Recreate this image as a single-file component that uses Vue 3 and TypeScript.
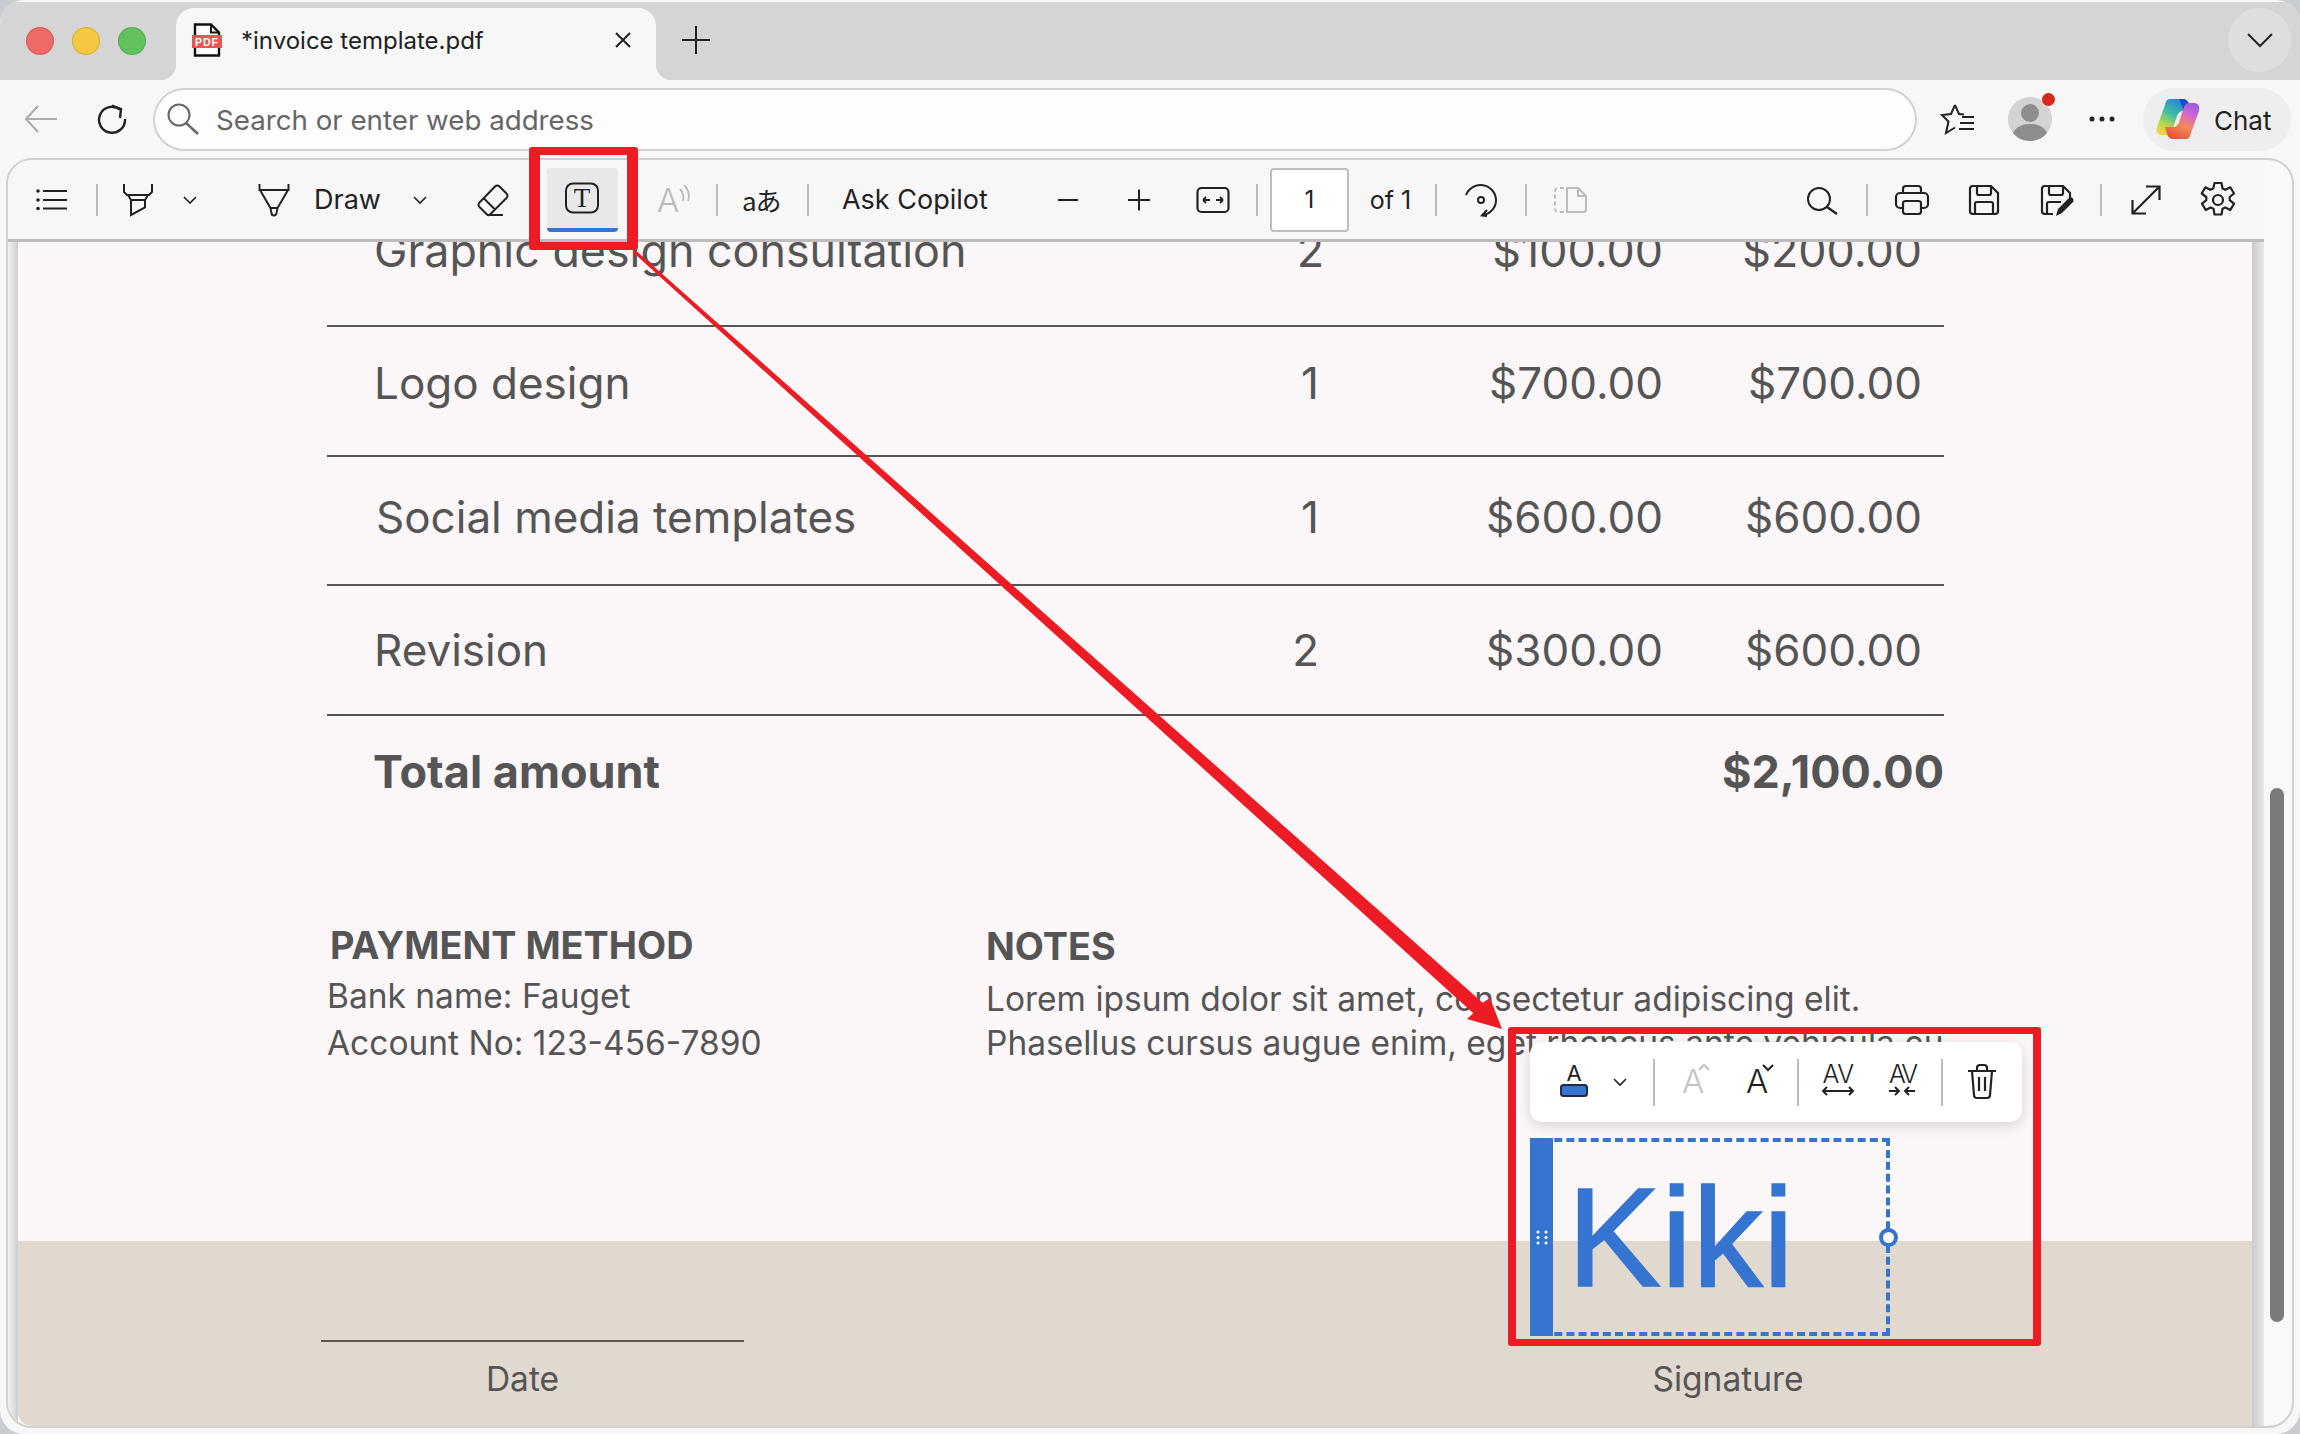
<template>
  <div class="app">
    <div class="window">
      <!-- tab strip -->
      <div class="tabstrip">
        <div class="lights">
          <span class="light red"></span>
          <span class="light yellow"></span>
          <span class="light green"></span>
        </div>
        <div class="tab">
          <svg class="pdf-icon" width="32" height="34" viewBox="0 0 32 34">
            <path d="M4 1.500h16l8 8v23H4z" fill="#fff" stroke="#111" stroke-width="2.400" />
            <path d="M20 1.500v8h8" fill="none" stroke="#111" stroke-width="2" />
            <rect x="1" y="12" width="30" height="13" fill="#e8544f" />
            <text x="16" y="22.500" text-anchor="middle" class="pdf-label">PDF</text>
          </svg>
          <span class="tab-title">*invoice template.pdf</span>
          <svg class="tab-close" width="18" height="18" viewBox="0 0 18 18">
            <path d="M2 2l14 14M16 2L2 16" stroke="#222" stroke-width="2" />
          </svg>
        </div>
        <svg class="tab-plus" width="30" height="30" viewBox="0 0 30 30">
          <path d="M15 1v28M1 15h28" stroke="#222" stroke-width="2" />
        </svg>
        <div class="tab-menu">
          <svg width="26" height="16" viewBox="0 0 26 16">
            <path d="M1 2l12 12L25 2" fill="none" stroke="#222" stroke-width="2" />
          </svg>
        </div>
      </div>

      <!-- address bar -->
      <div class="navbar">
        <svg class="nav-back" width="34" height="28" viewBox="0 0 34 28">
          <path d="M33 14H2M14 1L2 14l12 13" fill="none" stroke="#aaa" stroke-width="2" />
        </svg>
        <svg class="nav-reload" width="32" height="30" viewBox="0 0 32 30">
          <path d="M24 5.500A13 13 0 1 0 29 15" fill="none" stroke="#222" stroke-width="2.400" />
          <path d="M16 1.500l9 3.500-1 9" fill="none" stroke="#222" stroke-width="2.400" />
        </svg>
        <div class="address">
          <svg width="36" height="32" viewBox="0 0 36 32">
            <circle cx="14" cy="12" r="10.500" fill="none" stroke="#666" stroke-width="2" />
            <path d="M21 20l12 11" stroke="#666" stroke-width="2.400" />
          </svg>
          <span>Search or enter web address</span>
        </div>
        <svg class="nav-fav" width="36" height="32" viewBox="0 0 36 32">
          <path d="M15 2l4 9 5 .5M15 2l-4 9-9 1 6.500 6.500L6 30l9-5.500" fill="none" stroke="#222" stroke-width="2" />
          <path d="M22 14h12M20 20h14M19 26h15" stroke="#222" stroke-width="2" />
        </svg>
        <div class="avatar">
          <svg width="44" height="44" viewBox="0 0 44 44">
            <circle cx="22" cy="22" r="22" fill="#d4d3d1" />
            <circle cx="22" cy="16" r="9" fill="#8f8d8b" />
            <path d="M5 36c3-6 9-9 17-9s14 3 17 9c-4 5-10 8-17 8S9 41 5 36z" fill="#8f8d8b" />
          </svg>
          <span class="avatar-dot"></span>
        </div>
        <svg class="nav-more" width="28" height="8" viewBox="0 0 28 8">
          <circle cx="4" cy="4" r="2.500" fill="#222" />
          <circle cx="14" cy="4" r="2.500" fill="#222" />
          <circle cx="24" cy="4" r="2.500" fill="#222" />
        </svg>
        <div class="chat">
          <svg width="44" height="42" viewBox="0 0 44 42">
            <defs>
              <linearGradient id="copA" x1="0.700" y1="0" x2="0.200" y2="1">
                <stop offset="0" stop-color="#2b7fe0" />
                <stop offset="0.450" stop-color="#3fbfa0" />
                <stop offset="0.750" stop-color="#b9d84a" />
                <stop offset="1" stop-color="#f4d23c" />
              </linearGradient>
              <linearGradient id="copB" x1="0.300" y1="1" x2="0.700" y2="0">
                <stop offset="0" stop-color="#e8503a" />
                <stop offset="0.400" stop-color="#f08a5a" />
                <stop offset="0.700" stop-color="#d868c8" />
                <stop offset="1" stop-color="#9a5fe0" />
              </linearGradient>
            </defs>
            <path d="M14 1h13c3 0 5 2 6 5l2 7h-8c-3 0-5 2-6 5l-5 15c-1 3-3 4-6 4H6C1 37 0 33 1 29L9 7c1-4 2-6 5-6z" fill="url(#copA)" />
            <path d="M23 1h4c3 0 5 2 6 5l2 7h-7z" fill="#1f4fc8" />
            <path d="M30 41H17c-3 0-5-2-6-5l-2-7h8c3 0 5-2 6-5l5-15c1-3 3-4 6-4h4c5 0 6 4 5 8l-8 22c-1 4-2 6-5 6z" fill="url(#copB)" />
          </svg>
          <span>Chat</span>
        </div>
      </div>

      <!-- pdf viewer -->
      <div class="viewer">
        <div class="viewer-main">
          <div class="tools">
            <svg class="t-list" viewBox="0 0 40 40">
              <circle cx="7" cy="11" r="1.800" fill="#222" />
              <circle cx="7" cy="20" r="1.800" fill="#222" />
              <circle cx="7" cy="28.500" r="1.800" fill="#222" />
              <path d="M12 11h24M12 20h24M12 28.500h24" stroke="#222" stroke-width="2" />
            </svg>
            <i class="sep s-1"></i>
            <svg class="t-highlight" viewBox="0 0 40 40">
              <path d="M6 4v8l3 3h22l3-3V4M10 15l3 5h14l3-5M13 20v15l14-7.500V20" fill="none" stroke="#222" stroke-width="2" />
            </svg>
            <svg class="chev c-1" viewBox="0 0 16 10"><path d="M2 2l6 6 6-6" /></svg>
            <svg class="t-pen" viewBox="0 0 40 40">
              <path d="M6.500 4v6h29V4M7 10l10.500 18h7L35 10M17.500 28l1 5a2.500 2.500 0 0 0 5 0l1-5" fill="none" stroke="#222" stroke-width="2" />
            </svg>
            <span class="t-draw">Draw</span>
            <svg class="chev c-2" viewBox="0 0 16 10"><path d="M2 2l6 6 6-6" /></svg>
            <svg class="t-eraser" viewBox="0 0 40 40">
              <path d="M22 6.500a3 3 0 0 1 4.500 0l7 7a3 3 0 0 1 0 4.500L17 34.500a2 2 0 0 1-3 0l-7.500-7.500a3 3 0 0 1 0-4.500zM11 18.500l11 11M15 35h15" fill="none" stroke="#222" stroke-width="2" />
            </svg>
            <div class="t-text">
              <svg width="40" height="40" viewBox="0 0 40 40">
                <rect x="4" y="5.500" width="32" height="29" rx="7" fill="none" stroke="#222" stroke-width="2" />
                <text x="20" y="29" text-anchor="middle" class="serif-t">T</text>
              </svg>
            </div>
            <i class="sep s-2"></i>
            <svg class="t-read" viewBox="0 0 40 40">
              <text x="16" y="32" text-anchor="middle" class="icon-a off">A</text>
              <path d="M28 9c3 3 4 7 3 12M32 5c4 4 6 10 4 16" fill="none" stroke="#bbb" stroke-width="1.800" />
            </svg>
            <i class="sep s-3"></i>
            <span class="t-translate">aあ</span>
            <i class="sep s-4"></i>
            <span class="t-ask">Ask Copilot</span>
            <svg class="t-minus" viewBox="0 0 40 40"><path d="M10 20h20" stroke="#222" stroke-width="2" /></svg>
            <svg class="t-plus" viewBox="0 0 40 40"><path d="M9 20h22M20 9.500v21" stroke="#222" stroke-width="2" /></svg>
            <svg class="t-fit" viewBox="0 0 40 40">
              <rect x="4.500" y="8" width="31" height="24" rx="4" fill="none" stroke="#222" stroke-width="2.200" />
              <path d="M10 20h7M10 20l3-3M10 20l3 3M30 20h-7M30 20l-3-3M30 20l-3 3" fill="none" stroke="#222" stroke-width="1.800" />
            </svg>
            <i class="sep s-5"></i>
            <div class="t-page">1</div>
            <span class="t-of">of 1</span>
            <i class="sep s-6"></i>
            <svg class="t-rotate" viewBox="0 0 40 40">
              <path d="M5 15A15.500 15.500 0 0 1 35 20a15 15 0 0 1-13 15" fill="none" stroke="#222" stroke-width="2" />
              <path d="M26 30l-5 5.500 5 .500" fill="none" stroke="#222" stroke-width="2" />
              <circle cx="20" cy="20" r="3" fill="none" stroke="#222" stroke-width="2" />
            </svg>
            <i class="sep s-7"></i>
            <svg class="t-two" viewBox="0 0 40 40">
              <path d="M14 8H8a3 3 0 0 0-3 3v18a3 3 0 0 0 3 3h6" fill="none" stroke="#bbb" stroke-width="2" stroke-dasharray="4 3" />
              <path d="M17 8h11l8 8v13a3 3 0 0 1-3 3H17zM28 8v8h8" fill="none" stroke="#bbb" stroke-width="2" />
            </svg>

            <svg class="t-search" viewBox="0 0 40 40">
              <circle cx="17" cy="19" r="11" fill="none" stroke="#222" stroke-width="2" />
              <path d="M25 27l10 7" stroke="#222" stroke-width="2.400" />
            </svg>
            <i class="sep s-8"></i>
            <svg class="t-print" viewBox="0 0 40 40">
              <g fill="none" stroke="#222" stroke-width="2.200">
                <path d="M11 13V9a3 3 0 0 1 3-3h12a3 3 0 0 1 3 3v4" />
                <path d="M11 28H8a4 4 0 0 1-4-4v-7a4 4 0 0 1 4-4h24a4 4 0 0 1 4 4v7a4 4 0 0 1-4 4h-3" />
                <rect x="11" y="21" width="18" height="13" rx="2.500" />
              </g>
            </svg>
            <svg class="t-save" viewBox="0 0 40 40">
              <g fill="none" stroke="#222" stroke-width="2.200">
                <path d="M9 6h18l7 7v18a3 3 0 0 1-3 3H9a3 3 0 0 1-3-3V9a3 3 0 0 1 3-3z" />
                <path d="M13 6v7a2 2 0 0 0 2 2h10a2 2 0 0 0 2-2V6M11 34V24a2 2 0 0 1 2-2h14a2 2 0 0 1 2 2v10" />
              </g>
            </svg>
            <svg class="t-saveas" viewBox="0 0 40 40">
              <g fill="none" stroke="#222" stroke-width="2.200">
                <path d="M17 34H9a3 3 0 0 1-3-3V9a3 3 0 0 1 3-3h18l7 7v6" />
                <path d="M13 6v7a2 2 0 0 0 2 2h10a2 2 0 0 0 2-2V6M11 34V24a2 2 0 0 1 2-2h12" />
              </g>
              <path d="M20 36l2-7 11-11c2-2 6 1 4 4L26 33z" fill="#222" />
            </svg>
            <i class="sep s-9"></i>
            <svg class="t-expand" viewBox="0 0 40 40">
              <path d="M7 33L33 7M20 6.500h13.500V20M6.500 20v13.500H20" fill="none" stroke="#222" stroke-width="2.200" />
            </svg>
            <svg class="t-gear" viewBox="0 0 40 40">
              <g fill="none" stroke="#222" stroke-width="2.200">
                <path d="M16.500 3h7l1 5.500 2.800 1.300 5-2.500 3.700 6.200-4.300 3.500v3.200l4.300 3.500-3.700 6.200-5-2.500-2.800 1.300-1 5.800h-7l-1-5.800-2.800-1.300-5 2.500-3.700-6.200 4.300-3.500V17L3.700 13.500 7.400 7.300l5 2.500 2.800-1.300z" stroke-linejoin="round" />
                <circle cx="20" cy="20" r="5" />
              </g>
            </svg>
          </div>

          <div class="page-frame">
            <div class="page">
              <div class="doc">
                <div class="items">
                  <div v-for="row in rows" :key="row.name" class="item" :class="row.cls">
                    <span class="item-name">{{ row.name }}</span>
                    <span class="item-qty">{{ row.qty }}</span>
                    <span class="item-price">{{ row.price }}</span>
                    <span class="item-amount">{{ row.amount }}</span>
                  </div>
                  <div class="total">
                    <span>Total amount</span>
                    <span>$2,100.00</span>
                  </div>
                </div>

                <div class="info">
                  <div class="payment">
                    <h3>PAYMENT METHOD</h3>
                    <p>Bank name: Fauget</p>
                    <p>Account No: 123-456-7890</p>
                  </div>
                  <div class="notes">
                    <h3>NOTES</h3>
                    <p>Lorem ipsum dolor sit amet, consectetur adipiscing elit.</p>
                    <p>Phasellus cursus augue enim, eget rhoncus ante vehicula eu</p>
                  </div>
                </div>
              </div>

              <div class="doc-foot">
                <div class="foot-date">
                  <div class="foot-line"></div>
                  <span>Date</span>
                </div>
                <div class="foot-sign">Signature</div>
              </div>
            </div>
          </div>
        </div>

        <div class="track">
          <div class="thumb"></div>
        </div>
      </div>
    </div>

    <!-- floating text toolbar and the text box -->
    <div class="float-bar">
      <svg class="f-color" viewBox="0 0 44 44">
        <text x="22" y="20.500" text-anchor="middle" class="icon-small">A</text>
        <rect x="9" y="25" width="26" height="11" rx="2.500" fill="#3574d0" stroke="#1d2b45" stroke-width="2" />
      </svg>
      <svg class="chev f-chev" viewBox="0 0 16 10"><path d="M2 2l6 6 6-6" /></svg>
      <i class="sep f-s1"></i>
      <svg class="f-up" viewBox="0 0 44 44">
        <text x="20" y="33" text-anchor="middle" class="icon-grow off">A</text>
        <path d="M26 10l5-5 5 5" fill="none" stroke="#c4c4c4" stroke-width="2" />
      </svg>
      <svg class="f-down" viewBox="0 0 44 44">
        <text x="20" y="33" text-anchor="middle" class="icon-grow">A</text>
        <path d="M26 5l5 5 5-5" fill="none" stroke="#222" stroke-width="2" />
      </svg>
      <i class="sep f-s2"></i>
      <svg class="f-wide" viewBox="0 0 44 44">
        <text x="22" y="23" text-anchor="middle" class="icon-av">AV</text>
        <path d="M7 31h30M11 27l-4 4 4 4M33 27l4 4-4 4" fill="none" stroke="#222" stroke-width="2" />
      </svg>
      <svg class="f-narrow" viewBox="0 0 44 44">
        <text x="22" y="23" text-anchor="middle" class="icon-av tight">AV</text>
        <path d="M9 31h10M15 27l4 4-4 4M35 31H25M29 27l-4 4 4 4" fill="none" stroke="#222" stroke-width="2" />
      </svg>
      <i class="sep f-s3"></i>
      <svg class="f-trash" viewBox="0 0 44 44">
        <g fill="none" stroke="#222" stroke-width="2.200">
          <path d="M8 11h28M12 11l2 24a3 3 0 0 0 3 3h10a3 3 0 0 0 3-3l2-24M17 11V8a3 3 0 0 1 3-3h4a3 3 0 0 1 3 3v3M19 17v14M25 17v14" />
        </g>
      </svg>
    </div>

    <div class="sign-box">
      <div class="sign-grip">
        <svg width="12" height="15" viewBox="0 0 12 15">
          <g fill="#fff">
            <circle cx="2" cy="2" r="1.500" /><circle cx="10" cy="2" r="1.500" />
            <circle cx="2" cy="7.500" r="1.500" /><circle cx="10" cy="7.500" r="1.500" />
            <circle cx="2" cy="13" r="1.500" /><circle cx="10" cy="13" r="1.500" />
          </g>
        </svg>
      </div>
      <span class="sign-text">Kiki</span>
      <span class="sign-handle"></span>
    </div>

    <!-- red annotations -->
    <div class="mark mark-tool"></div>
    <div class="mark mark-sign"></div>
    <svg class="arrow" width="2300" height="1434" viewBox="0 0 2300 1434">
      <polygon points="632.800,252.100 1473.300,1013.200 1467,1019 1502,1029 1490,998 1482.700,1002.800 635.200,249.900" fill="#ed1c24" />
    </svg>
  </div>
</template>

<script setup lang="ts">
interface Row {
  name: string
  qty: number
  price: string
  amount: string
  cls: string
}

const rows: Row[] = [
  { name: 'Graphic design consultation', qty: 2, price: '$100.00', amount: '$200.00', cls: 'r1' },
  { name: 'Logo design', qty: 1, price: '$700.00', amount: '$700.00', cls: 'r2' },
  { name: 'Social media templates', qty: 1, price: '$600.00', amount: '$600.00', cls: 'r3' },
  { name: 'Revision', qty: 2, price: '$300.00', amount: '$600.00', cls: 'r4' },
]
</script>

<style>
html,
body {
  margin: 0;
  background: #c9ccd0;
}
</style>

<style scoped>
.app {
  position: relative;
  width: 2300px;
  height: 1434px;
  overflow: hidden;
  font-family: Inter, "Noto Sans", sans-serif;
  color: #222;
}

.window {
  display: flex;
  flex-direction: column;
  height: 1434px;
  box-sizing: border-box;
  padding-top: 2px;
  background: #f7f7f7;
  border-radius: 24px;
  overflow: hidden;
}

/* tab strip */
.tabstrip {
  display: flex;
  align-items: flex-start;
  height: 78px;
  flex: none;
  background: #d5d5d5;
}

.lights {
  display: flex;
  gap: 18px;
  padding: 25px 0 0 26px;
  width: 150px;
  box-sizing: border-box;
}

.light {
  width: 28px;
  height: 28px;
  border-radius: 50%;
  box-sizing: border-box;
  border: 1px solid rgba(0, 0, 0, 0.12);
}
.red { background: #ee6a66; }
.yellow { background: #f5c842; }
.green { background: #62c15f; }

.tab {
  position: relative;
  display: flex;
  align-items: center;
  width: 480px;
  height: 72px;
  margin: 6px 0 0 26px;
  background: #f7f7f7;
  border-radius: 18px 18px 0 0;
  box-sizing: border-box;
  padding: 0 24px 8px 16px;
  font-size: 24px;
}

.tab::before,
.tab::after {
  content: "";
  position: absolute;
  bottom: 0;
  width: 16px;
  height: 16px;
}
.tab::before {
  left: -16px;
  background: radial-gradient(circle at 0 0, transparent 16px, #f7f7f7 16.500px);
}
.tab::after {
  right: -16px;
  background: radial-gradient(circle at 100% 0, transparent 16px, #f7f7f7 16.500px);
}

.pdf-icon { flex: none; margin-left: -1px; }
.pdf-label { font: 700 10.500px "Liberation Sans", sans-serif; fill: #fff; letter-spacing: 1px; }
.tab-title { margin-left: 18px; flex: 1; white-space: nowrap; }
.tab-close { flex: none; }

.tab-plus { margin: 23px 0 0 25px; flex: none; }

.tab-menu {
  display: flex;
  align-items: center;
  justify-content: center;
  width: 63px;
  height: 64px;
  margin: 6px 9px 0 auto;
  border-radius: 50%;
  background: #dedede;
}

/* address bar */
.navbar {
  display: flex;
  align-items: center;
  height: 78px;
  flex: none;
  padding-left: 24px;
}

.nav-back { flex: none; }
.nav-reload { flex: none; margin-left: 38px; }

.address {
  display: flex;
  align-items: center;
  gap: 15px;
  width: 1764px;
  height: 63px;
  margin-left: 25px;
  padding-left: 10px;
  box-sizing: border-box;
  background: #fdfdfd;
  border: 2px solid #d2d2d2;
  border-radius: 32px;
  font-size: 27.700px;
  color: #666;
}
.address span { padding-top: 1px; }

.nav-fav { margin-left: 23px; flex: none; }

.avatar { position: relative; margin-left: 32px; width: 44px; height: 44px; flex: none; }
.avatar svg { display: block; }
.avatar-dot {
  position: absolute;
  top: -4px;
  right: -3px;
  width: 13px;
  height: 13px;
  border-radius: 50%;
  background: #d5281e;
}

.nav-more { margin-left: 36px; flex: none; }

.chat {
  display: flex;
  align-items: center;
  gap: 14px;
  width: 148px;
  height: 63px;
  margin-left: 27px;
  padding-left: 13px;
  box-sizing: border-box;
  border-radius: 32px;
  background: #eeeeee;
  font-size: 26px;
}
.chat span { padding-top: 3px; }

/* viewer */
.viewer {
  display: flex;
  flex: 1;
  min-height: 0;
  margin: 0 6px 6px 6px;
  background: #f9f9f9;
  border: 2px solid #d0d0d0;
  border-radius: 26px;
  box-sizing: border-box;
  overflow: hidden;
}

.viewer-main {
  flex: 1;
  min-width: 0;
  display: flex;
  flex-direction: column;
}

.tools {
  display: flex;
  align-items: center;
  flex: none;
  height: 79px;
  border-bottom: 3px solid #bdbdbd;
  background: #f7f7f7;
  padding-right: 26px;
  font-size: 27px;
}

.tools svg:not(.chev) { width: 40px; height: 40px; flex: none; }
.sep { display: block; width: 2px; height: 32px; background: #bcbcbc; flex: none; }
.chev { width: 16px; height: 10px; flex: none; }
.chev path { fill: none; stroke: #222; stroke-width: 1.600; }

.t-list { margin-left: 23px; }
.s-1 { margin-left: 25px; }
.t-highlight { margin-left: 20px; }
.c-1 { margin-left: 24px; }
.t-pen { margin-left: 55px; }
.t-draw { margin-left: 21px; }
.c-2 { margin-left: 31px; }
.t-eraser { margin-left: 45px; }
.t-text {
  display: flex;
  align-items: center;
  justify-content: center;
  width: 71px;
  height: 64px;
  margin-left: 34px;
  box-sizing: border-box;
  background: #e8e8e8;
  border-bottom: 4px solid #3574d0;
  border-radius: 4px;
  flex: none;
}
.s-2 { margin-left: 9px; }
.t-read { margin-left: 23px; }
.s-3 { margin-left: 24px; }
.t-translate {
  margin-left: 24px;
  width: 40px;
  font: 26px "Noto Sans CJK JP", Inter, sans-serif;
  letter-spacing: -1px;
  flex: none;
  white-space: nowrap;
}
.s-4 { margin-left: 25px; }
.t-ask { margin-left: 33px; white-space: nowrap; }
.t-minus { margin-left: 60px; }
.t-plus { margin-left: 31px; }
.t-fit { margin-left: 34px; }
.s-5 { margin-left: 23px; }
.t-page {
  width: 79px;
  height: 64px;
  margin-left: 12px;
  box-sizing: border-box;
  display: flex;
  align-items: center;
  justify-content: center;
  background: #fff;
  border: 2px solid #bdbdbd;
  border-radius: 4px;
  flex: none;
  font-size: 24px;
}
.t-of { margin-left: 21px; font-size: 25px; white-space: nowrap; }
.s-6 { margin-left: 24px; }
.t-rotate { margin-left: 24px; }
.s-7 { margin-left: 24px; }
.t-two { margin-left: 23px; }
.t-search { margin-left: auto; }
.s-8 { margin-left: 24px; }
.t-print { margin-left: 24px; }
.t-save { margin-left: 32px; }
.t-saveas { margin-left: 32px; }
.s-9 { margin-left: 24px; }
.t-expand { margin-left: 24px; }
.t-gear { margin-left: 32px; }

.serif-t { font: 27px "Liberation Serif", serif; fill: #222; }
.icon-a { font: 300 33px Inter, sans-serif; fill: #222; }
.off { fill: #bbb; }

.page-frame {
  flex: 1;
  min-height: 0;
  display: flex;
  padding: 0 12px 0 10px;
  background:
    linear-gradient(90deg, #f2f2f2, #cfcfcf) left top / 10px 100% no-repeat,
    linear-gradient(90deg, #cacaca, #e8e8e8) right top / 12px 100% no-repeat;
}

.page {
  flex: 1;
  min-width: 0;
  display: flex;
  flex-direction: column;
  background: #fbf7f8;
  color: #555;
  overflow: hidden;
  border-radius: 0 0 0 14px;
}

.doc {
  flex: 1;
  min-height: 0;
  padding: 0 308px 0 309px;
}

.items {
  margin-top: -45px;
  font-size: 44px;
}

.item {
  display: grid;
  grid-template-columns: 892px 100px 344px 259px;
  align-items: center;
  height: 129.800px;
  box-sizing: border-box;
  border-bottom: 2px solid #555;
  white-space: nowrap;
  line-height: 1;
}

/* the rows of the pdf are not quite evenly placed against their rules */
.r1 { padding-bottom: 20px; font-size: 44.800px; }
.r1 .item-qty { margin-right: -5px; }
.r2 { padding-bottom: 16px; }
.r3 { padding-bottom: 6px; }
.r4 { padding-bottom: 0; }

.item-name { padding-left: 47px; }
.r3 .item-name { padding-left: 49px; }
.item-qty,
.item-price,
.item-amount { text-align: right; }

.total {
  display: flex;
  justify-content: space-between;
  padding: 29px 0 0 46px;
  font-weight: 700;
  font-size: 45px;
  line-height: 1.200;
}

.info {
  display: flex;
  margin-top: 124px;
  font-size: 33.500px;
}

.payment { width: 659px; flex: none; line-height: 47px; }
.notes { white-space: nowrap; line-height: 44px; }
.info h3 { font-size: 37.800px; line-height: 44px; font-weight: 700; }
.info p { margin: 0; }
.payment h3 { margin: 0 0 6px 3px; }
.notes h3 { margin: 1px 0 9px; }

.doc-foot {
  flex: none;
  height: 185px;
  background: #e1d8cf;
  display: flex;
  font-size: 33.500px;
  padding-left: 303px;
  box-sizing: border-box;
}

.foot-date { width: 423px; padding-top: 99px; flex: none; }
.foot-date span { display: block; padding-right: 20px; margin-top: -1px; text-align: center; }
.foot-line { height: 2px; background: #5f5750; margin-bottom: 18px; }
.foot-sign { margin-left: 784px; width: 400px; padding-top: 118px; text-align: center; }

.track {
  width: 28px;
  flex: none;
  padding: 628px 8px 0 6px;
  box-sizing: border-box;
}

.thumb {
  height: 534px;
  background: #7a7a7a;
  border-radius: 7px;
}

/* floating toolbar */
.float-bar {
  position: absolute;
  left: 1530px;
  top: 1042px;
  display: flex;
  align-items: center;
  width: 492px;
  height: 80px;
  background: #fff;
  border-radius: 12px;
  box-shadow: 0 4px 14px rgba(0, 0, 0, 0.14);
}

.float-bar svg:not(.chev) { width: 44px; height: 44px; flex: none; }
.float-bar .sep { height: 47px; }
.f-color { margin-left: 22px; }
.f-chev { margin-left: 16px; }
.f-s1 { margin-left: 25px; }
.f-up { margin-left: 18px; }
.f-down { margin-left: 20px; }
.f-s2 { margin-left: 16px; }
.f-wide { margin-left: 17px; }
.f-narrow { margin-left: 20px; }
.f-s3 { margin-left: 17px; }
.f-trash { margin-left: 17px; }

.icon-small { font: 400 22px Inter, sans-serif; fill: #222; }
.icon-grow { font: 300 33px Inter, sans-serif; fill: #222; }
.icon-grow.off { fill: #c4c4c4; }
.icon-av { font: 300 25px Inter, sans-serif; fill: #222; letter-spacing: -0.500px; }
.icon-av.tight { letter-spacing: -3px; }

/* text box on the page */
.sign-box {
  position: absolute;
  left: 1530px;
  top: 1138px;
  width: 360px;
  height: 198px;
  box-sizing: border-box;
  display: flex;
  align-items: center;
  border: 4px dashed #3574d0;
}

.sign-grip {
  display: flex;
  align-items: center;
  justify-content: center;
  width: 23px;
  height: 198px;
  margin: -4px 0 -4px -4px;
  background: #3574d0;
  border-radius: 3px 0 0 3px;
  flex: none;
}

.sign-text {
  margin-left: 14px;
  font: 141px "Liberation Sans", Arial, sans-serif;
  -webkit-text-stroke: 1.500px #3574d0;
  color: #3574d0;
  line-height: 1;
}

.sign-handle {
  position: absolute;
  right: -12px;
  top: 86px;
  width: 19px;
  height: 19px;
  box-sizing: border-box;
  border: 4px solid #3574d0;
  border-radius: 50%;
  background: #fff;
}

/* red annotations */
.mark {
  position: absolute;
  box-sizing: border-box;
  border: 9px solid #ed1c24;
  border-radius: 3px;
}
.mark-tool { left: 529px; top: 147px; width: 109px; height: 103px; border-width: 8px 11px; }
.mark-sign { left: 1508px; top: 1027px; width: 533px; height: 319px; border-width: 7px 8px; }
.arrow { position: absolute; left: 0; top: 0; pointer-events: none; }
</style>
